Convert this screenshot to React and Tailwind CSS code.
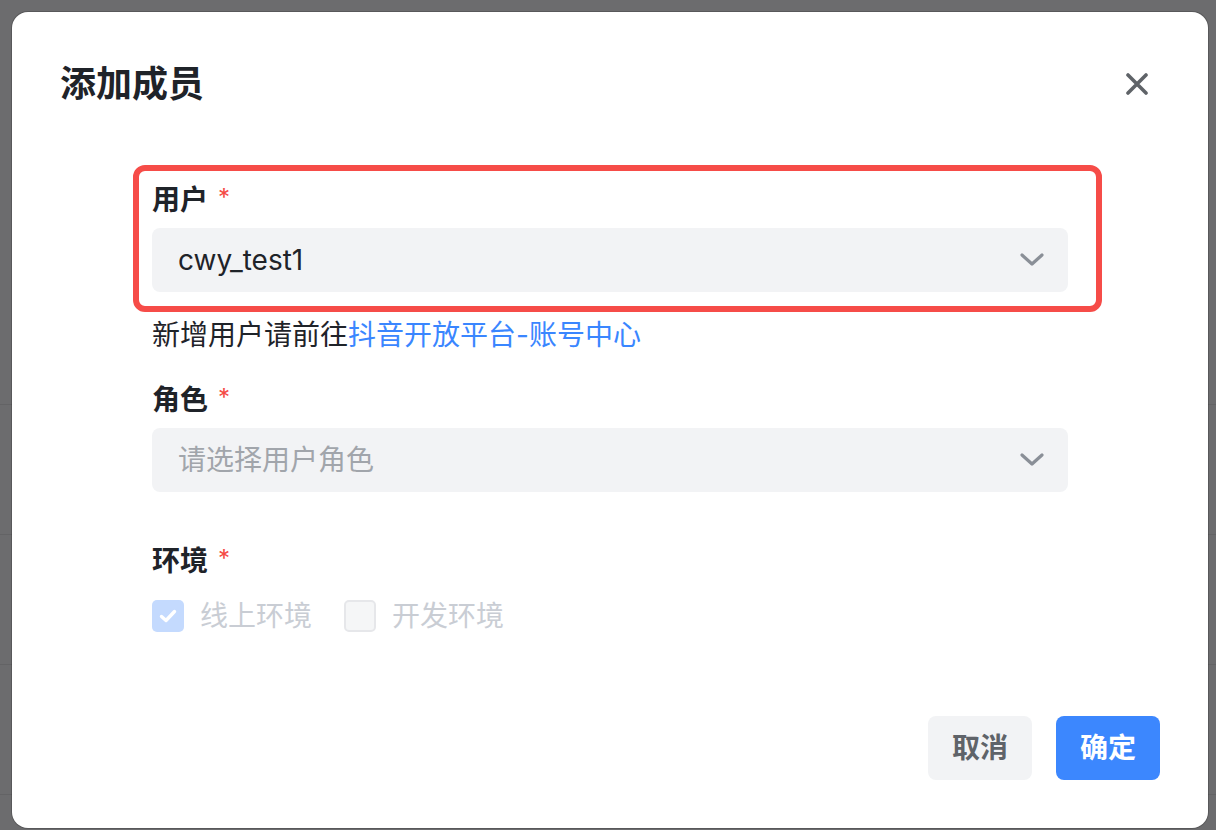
import React from 'react';

const Chevron = () => (
  <svg width="24" height="14" viewBox="0 0 24 14" fill="none">
    <polyline points="2,2 12,11 22,2" stroke="#8a8f97" strokeWidth="3.2" strokeLinecap="round" strokeLinejoin="round" />
  </svg>
);

const Required = () => (
  <span className="ml-[10px] self-start pt-[6px] text-[24px] leading-[24px] font-normal text-[#f54a45]">*</span>
);

const Label = ({ children }) => (
  <div className="flex h-[40px] items-center text-[28px] font-semibold leading-[40px] text-[#1f2329]">
    {children}
    <Required />
  </div>
);

const Select = ({ value, placeholder }) => (
  <div className="mt-2 flex h-16 items-center justify-between rounded-lg bg-[#f2f3f5] pl-[26px] pr-[24px]">
    {value ? (
      <span className="text-[28px] text-[#1f2329]">{value}</span>
    ) : (
      <span className="text-[28px] text-[#a1a5ab]">{placeholder}</span>
    )}
    <Chevron />
  </div>
);

const App = () => {
  return (
    <div className="relative h-[830px] w-[1216px] overflow-hidden bg-[#6c6c6e] font-[Inter,'Noto_Sans_CJK_SC',sans-serif]">
      {/* rows of the page behind the mask */}
      <div className="pt-[404px]">
        {[0, 1, 2, 3].map(i => (
          <div key={i} className="h-[130px] border-t border-[#636365]" />
        ))}
      </div>

      <div className="absolute left-3 top-3 flex h-[816px] w-[1196px] flex-col rounded-2xl bg-white p-12 shadow-[0_0_0_1px_rgba(0,0,0,0.18)]">
        <div className="flex items-center justify-between">
          <h2 className="text-[36px] font-semibold leading-[48px] text-[#1f2329]">添加成员</h2>
          <svg className="mr-3" width="22" height="22" viewBox="0 0 22 22" fill="none">
            <path d="M2 2L20 20M20 2L2 20" stroke="#5f6368" strokeWidth="3.6" strokeLinecap="round" />
          </svg>
        </div>

        <div className="mx-auto mt-[72px] w-[916px]">
          <div className="relative">
            <div className="absolute -left-[19px] -right-[34px] -top-[15px] -bottom-[20px] rounded-[12px] border-[6px] border-[#f64c48]" />
            <Label>用户</Label>
            <Select value="cwy_test1" />
          </div>
          <div className="mt-[23px] text-[28px] leading-[40px] text-[#1f2329]">
            新增用户请前往<span className="text-[#3a86ff]">抖音开放平台-账号中心</span>
          </div>

          <div className="mt-[25px]">
            <Label>角色</Label>
            <Select placeholder="请选择用户角色" />
          </div>

          <div className="mt-[49px]">
            <Label>环境</Label>
            <div className="mt-[19px] flex h-8 items-center">
              <span className="flex h-8 w-8 items-center justify-center rounded-[5px] bg-[#c4dafe]">
                <svg width="18" height="14" viewBox="0 0 18 14" fill="none">
                  <polyline points="2.5,7.5 7,11.5 15.5,2.5" stroke="#ffffff" strokeWidth="3.4" strokeLinecap="round" strokeLinejoin="round" />
                </svg>
              </span>
              <span className="ml-4 text-[28px] leading-[40px] text-[#c9cdd4]">线上环境</span>
              <span className="ml-8 h-8 w-8 rounded-[5px] border-2 border-[#e6e7ea] bg-[#f5f6f7]" />
              <span className="ml-4 text-[28px] leading-[40px] text-[#c9cdd4]">开发环境</span>
            </div>
          </div>
        </div>

        <div className="mt-auto flex justify-end gap-6">
          <button className="h-16 w-[104px] rounded-lg bg-[#f2f3f5] text-[28px] font-semibold text-[#5f6369]">取消</button>
          <button className="h-16 w-[104px] rounded-lg bg-[#3c87fe] text-[28px] font-semibold text-white">确定</button>
        </div>
      </div>
    </div>
  );
};

export default App;
